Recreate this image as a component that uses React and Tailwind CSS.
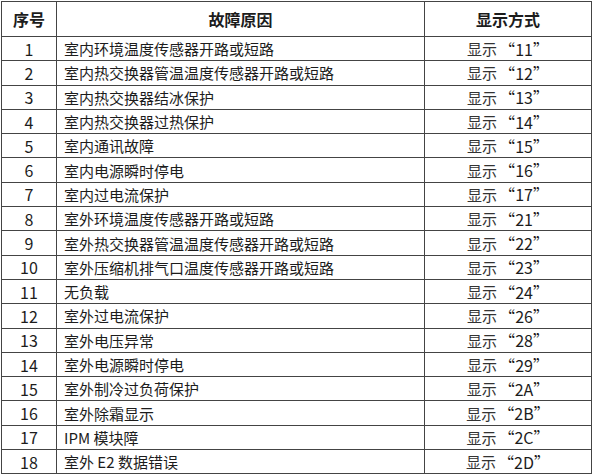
import React from "react";

const rows = [
  ["1", "室内环境温度传感器开路或短路", "11"],
  ["2", "室内热交换器管温温度传感器开路或短路", "12"],
  ["3", "室内热交换器结冰保护", "13"],
  ["4", "室内热交换器过热保护", "14"],
  ["5", "室内通讯故障", "15"],
  ["6", "室内电源瞬时停电", "16"],
  ["7", "室内过电流保护", "17"],
  ["8", "室外环境温度传感器开路或短路", "21"],
  ["9", "室外热交换器管温温度传感器开路或短路", "22"],
  ["10", "室外压缩机排气口温度传感器开路或短路", "23"],
  ["11", "无负载", "24"],
  ["12", "室外过电流保护", "26"],
  ["13", "室外电压异常", "28"],
  ["14", "室外电源瞬时停电", "29"],
  ["15", "室外制冷过负荷保护", "2A"],
  ["16", "室外除霜显示", "2B"],
  ["17", "IPM 模块障", "2C"],
  ["18", "室外 E2 数据错误", "2D"],
];

export default function App() {
  return (
    <div className="w-[593px] h-[475px] bg-white pl-px pt-px" style={{ fontFamily: '"Noto Sans CJK SC", "Noto Sans", sans-serif' }}>
      <div className="w-[591px] border border-[#444] text-[#1c1c1c]">
        <div className="flex h-[34px] font-bold text-[16px] leading-none">
          <div className="w-[55px] shrink-0 border-r border-[#444] flex items-center justify-center">序号</div>
          <div className="w-[368px] shrink-0 border-r border-[#444] flex items-center justify-center">故障原因</div>
          <div className="flex-1 flex items-center justify-center">显示方式</div>
        </div>
        {rows.map(([n, desc, code]) => (
          <div key={n} className="flex h-[24.3px] border-t border-[#444] text-[15px] leading-none">
            <div className="w-[55px] shrink-0 border-r border-[#444] flex items-center justify-center text-[16px]">{n}</div>
            <div className="w-[368px] shrink-0 border-r border-[#444] flex items-center pl-[7px] whitespace-nowrap">{desc}</div>
            <div className="flex-1 flex items-center justify-center whitespace-nowrap text-[#333]">
              显示<span className="ml-[2px] text-[16px] text-[#1c1c1c]">“{code}”</span>
            </div>
          </div>
        ))}
      </div>
    </div>
  );
}
